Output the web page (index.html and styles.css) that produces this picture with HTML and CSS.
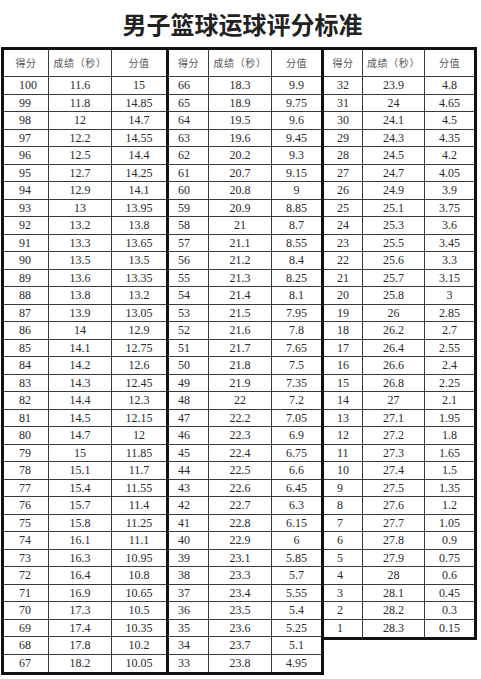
FILE: index.html
```html
<!DOCTYPE html>
<html lang="zh">
<head>
<meta charset="utf-8">
<title>男子篮球运球评分标准</title>
<link rel="stylesheet" href="styles.css">
</head>
<body>
<h1 class="title">男子篮球运球评分标准</h1>
<div class="sheet">
  <div class="grp g1">
    <div class="h">得分</div><div class="h">成绩（秒）</div><div class="h v">分值</div>
    <div class="s">100</div><div>11.6</div><div class="v">15</div>
    <div class="s">99</div><div>11.8</div><div class="v">14.85</div>
    <div class="s">98</div><div>12</div><div class="v">14.7</div>
    <div class="s">97</div><div>12.2</div><div class="v">14.55</div>
    <div class="s">96</div><div>12.5</div><div class="v">14.4</div>
    <div class="s">95</div><div>12.7</div><div class="v">14.25</div>
    <div class="s">94</div><div>12.9</div><div class="v">14.1</div>
    <div class="s">93</div><div>13</div><div class="v">13.95</div>
    <div class="s">92</div><div>13.2</div><div class="v">13.8</div>
    <div class="s">91</div><div>13.3</div><div class="v">13.65</div>
    <div class="s">90</div><div>13.5</div><div class="v">13.5</div>
    <div class="s">89</div><div>13.6</div><div class="v">13.35</div>
    <div class="s">88</div><div>13.8</div><div class="v">13.2</div>
    <div class="s">87</div><div>13.9</div><div class="v">13.05</div>
    <div class="s">86</div><div>14</div><div class="v">12.9</div>
    <div class="s">85</div><div>14.1</div><div class="v">12.75</div>
    <div class="s">84</div><div>14.2</div><div class="v">12.6</div>
    <div class="s">83</div><div>14.3</div><div class="v">12.45</div>
    <div class="s">82</div><div>14.4</div><div class="v">12.3</div>
    <div class="s">81</div><div>14.5</div><div class="v">12.15</div>
    <div class="s">80</div><div>14.7</div><div class="v">12</div>
    <div class="s">79</div><div>15</div><div class="v">11.85</div>
    <div class="s">78</div><div>15.1</div><div class="v">11.7</div>
    <div class="s">77</div><div>15.4</div><div class="v">11.55</div>
    <div class="s">76</div><div>15.7</div><div class="v">11.4</div>
    <div class="s">75</div><div>15.8</div><div class="v">11.25</div>
    <div class="s">74</div><div>16.1</div><div class="v">11.1</div>
    <div class="s">73</div><div>16.3</div><div class="v">10.95</div>
    <div class="s">72</div><div>16.4</div><div class="v">10.8</div>
    <div class="s">71</div><div>16.9</div><div class="v">10.65</div>
    <div class="s">70</div><div>17.3</div><div class="v">10.5</div>
    <div class="s">69</div><div>17.4</div><div class="v">10.35</div>
    <div class="s">68</div><div>17.8</div><div class="v">10.2</div>
    <div class="s">67</div><div>18.2</div><div class="v">10.05</div>
  </div>
  <div class="grp g2">
    <div class="h">得分</div><div class="h">成绩（秒）</div><div class="h v">分值</div>
    <div class="s">66</div><div>18.3</div><div class="v">9.9</div>
    <div class="s">65</div><div>18.9</div><div class="v">9.75</div>
    <div class="s">64</div><div>19.5</div><div class="v">9.6</div>
    <div class="s">63</div><div>19.6</div><div class="v">9.45</div>
    <div class="s">62</div><div>20.2</div><div class="v">9.3</div>
    <div class="s">61</div><div>20.7</div><div class="v">9.15</div>
    <div class="s">60</div><div>20.8</div><div class="v">9</div>
    <div class="s">59</div><div>20.9</div><div class="v">8.85</div>
    <div class="s">58</div><div>21</div><div class="v">8.7</div>
    <div class="s">57</div><div>21.1</div><div class="v">8.55</div>
    <div class="s">56</div><div>21.2</div><div class="v">8.4</div>
    <div class="s">55</div><div>21.3</div><div class="v">8.25</div>
    <div class="s">54</div><div>21.4</div><div class="v">8.1</div>
    <div class="s">53</div><div>21.5</div><div class="v">7.95</div>
    <div class="s">52</div><div>21.6</div><div class="v">7.8</div>
    <div class="s">51</div><div>21.7</div><div class="v">7.65</div>
    <div class="s">50</div><div>21.8</div><div class="v">7.5</div>
    <div class="s">49</div><div>21.9</div><div class="v">7.35</div>
    <div class="s">48</div><div>22</div><div class="v">7.2</div>
    <div class="s">47</div><div>22.2</div><div class="v">7.05</div>
    <div class="s">46</div><div>22.3</div><div class="v">6.9</div>
    <div class="s">45</div><div>22.4</div><div class="v">6.75</div>
    <div class="s">44</div><div>22.5</div><div class="v">6.6</div>
    <div class="s">43</div><div>22.6</div><div class="v">6.45</div>
    <div class="s">42</div><div>22.7</div><div class="v">6.3</div>
    <div class="s">41</div><div>22.8</div><div class="v">6.15</div>
    <div class="s">40</div><div>22.9</div><div class="v">6</div>
    <div class="s">39</div><div>23.1</div><div class="v">5.85</div>
    <div class="s">38</div><div>23.3</div><div class="v">5.7</div>
    <div class="s">37</div><div>23.4</div><div class="v">5.55</div>
    <div class="s">36</div><div>23.5</div><div class="v">5.4</div>
    <div class="s">35</div><div>23.6</div><div class="v">5.25</div>
    <div class="s">34</div><div>23.7</div><div class="v">5.1</div>
    <div class="s">33</div><div>23.8</div><div class="v">4.95</div>
  </div>
  <div class="grp g3">
    <div class="h">得分</div><div class="h">成绩（秒）</div><div class="h v">分值</div>
    <div class="s">32</div><div>23.9</div><div class="v">4.8</div>
    <div class="s">31</div><div>24</div><div class="v">4.65</div>
    <div class="s">30</div><div>24.1</div><div class="v">4.5</div>
    <div class="s">29</div><div>24.3</div><div class="v">4.35</div>
    <div class="s">28</div><div>24.5</div><div class="v">4.2</div>
    <div class="s">27</div><div>24.7</div><div class="v">4.05</div>
    <div class="s">26</div><div>24.9</div><div class="v">3.9</div>
    <div class="s">25</div><div>25.1</div><div class="v">3.75</div>
    <div class="s">24</div><div>25.3</div><div class="v">3.6</div>
    <div class="s">23</div><div>25.5</div><div class="v">3.45</div>
    <div class="s">22</div><div>25.6</div><div class="v">3.3</div>
    <div class="s">21</div><div>25.7</div><div class="v">3.15</div>
    <div class="s">20</div><div>25.8</div><div class="v">3</div>
    <div class="s">19</div><div>26</div><div class="v">2.85</div>
    <div class="s">18</div><div>26.2</div><div class="v">2.7</div>
    <div class="s">17</div><div>26.4</div><div class="v">2.55</div>
    <div class="s">16</div><div>26.6</div><div class="v">2.4</div>
    <div class="s">15</div><div>26.8</div><div class="v">2.25</div>
    <div class="s">14</div><div>27</div><div class="v">2.1</div>
    <div class="s">13</div><div>27.1</div><div class="v">1.95</div>
    <div class="s">12</div><div>27.2</div><div class="v">1.8</div>
    <div class="s">11</div><div>27.3</div><div class="v">1.65</div>
    <div class="s">10</div><div>27.4</div><div class="v">1.5</div>
    <div class="s">9</div><div>27.5</div><div class="v">1.35</div>
    <div class="s">8</div><div>27.6</div><div class="v">1.2</div>
    <div class="s">7</div><div>27.7</div><div class="v">1.05</div>
    <div class="s">6</div><div>27.8</div><div class="v">0.9</div>
    <div class="s">5</div><div>27.9</div><div class="v">0.75</div>
    <div class="s">4</div><div>28</div><div class="v">0.6</div>
    <div class="s">3</div><div>28.1</div><div class="v">0.45</div>
    <div class="s">2</div><div>28.2</div><div class="v">0.3</div>
    <div class="s">1</div><div>28.3</div><div class="v">0.15</div>
  </div>
</div>
</body>
</html>
```

FILE: styles.css
```css
html, body {
  margin: 0;
  padding: 0;
  background: #ffffff;
}

body {
  width: 481px;
  height: 679px;
  overflow: hidden;
  font-family: "Liberation Serif", "Noto Sans CJK SC", serif;
  color: #2a2a2a;
}

.title {
  margin: 0;
  height: 47px;
  display: flex;
  align-items: center;
  justify-content: center;
  font-family: "Noto Sans CJK SC", sans-serif;
  font-weight: 700;
  font-size: 24px;
  line-height: 1;
  color: #222222;
  padding-left: 4px;
  box-sizing: border-box;
}

.sheet {
  display: flex;
  align-items: flex-start;
  padding-left: 1px;
}

.grp {
  display: grid;
  grid-template-rows: 27px;
  grid-auto-rows: 17.5px;
  border: 3px solid #111111;
}

.g1 {
  grid-template-columns: 45px 63px 54px;
}

.g2 {
  border-left: none;
  grid-template-columns: 40px 63px 49px;
}

.g3 {
  border-left: none;
  grid-template-columns: 39px 62px 49px;
}

.grp > div {
  box-sizing: border-box;
  display: flex;
  align-items: center;
  justify-content: center;
  border-right: 1px solid #3a3a3a;
  border-bottom: 1px solid #3a3a3a;
  font-size: 12px;
  line-height: 1;
  white-space: nowrap;
}

.grp > .v {
  border-right: none;
}

.grp > div:nth-last-child(-n+3) {
  border-bottom: none;
}

.grp > .s {
  justify-content: flex-start;
}

.g1 > .s { padding-left: 15px; }
.g2 > .s { padding-left: 9px; }
.g3 > .s { padding-left: 13px; }

.grp > .h {
  font-family: "Noto Sans CJK SC", sans-serif;
  font-size: 10px;
  letter-spacing: 0.6px;
  color: #555555;
  justify-content: center;
  padding-left: 0;
  border-bottom: 1px solid #3a3a3a;
}
```
